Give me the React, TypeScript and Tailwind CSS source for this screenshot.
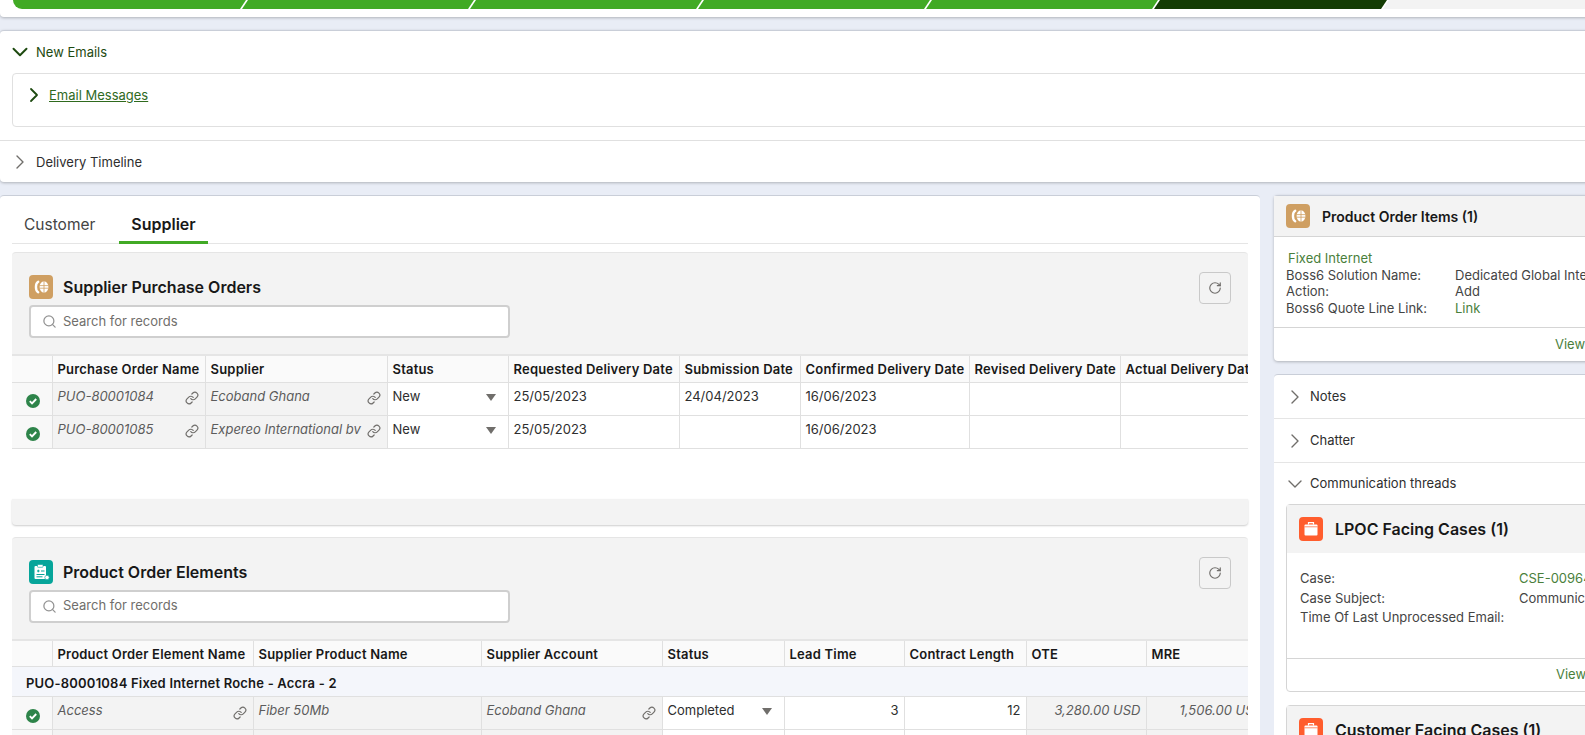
import React from 'react';
import { ChevronDown, ChevronRight, Link, RotateCw, Search } from 'lucide-react';

const CoinIcon = () => (
  <svg width="24" height="24" viewBox="0 0 24 24" className="shrink-0">
    <rect width="24" height="24" rx="4" fill="#cf9f62" />
    <path d="M9.2 6.8C6.2 8.4 6.2 15.6 9.2 17.2" fill="none" stroke="#fff" strokeWidth="2.4" strokeLinecap="round" />
    <ellipse cx="15" cy="12" rx="4.4" ry="5.8" fill="#fff" />
    <path d="M15 6v12M10.6 10.6h8.8M10.6 13.2h8.8" stroke="#cf9f62" strokeWidth="0.8" />
  </svg>
);

const ClipboardIcon = () => (
  <svg width="24" height="24" viewBox="0 0 24 24" className="shrink-0">
    <rect width="24" height="24" rx="4" fill="#06a59a" />
    <rect x="5.5" y="6" width="11.5" height="13" rx="1" fill="#fff" />
    <rect x="8.5" y="4.5" width="5.5" height="2.8" rx="0.6" fill="#fff" stroke="#06a59a" strokeWidth="0.6" />
    <path d="M8 11h2.6M9.3 9.7v2.6M12 11h3.5M7.5 14.5h8M7.5 16.8h6" stroke="#06a59a" strokeWidth="1" />
    <circle cx="18" cy="17.5" r="2.2" fill="#fff" stroke="#06a59a" strokeWidth="0.6" />
  </svg>
);

const CaseIcon = () => (
  <svg width="24" height="24" viewBox="0 0 24 24" className="shrink-0">
    <rect width="24" height="24" rx="4" fill="#ff5d2d" />
    <rect x="5.5" y="7.5" width="13" height="11" rx="1" fill="#fff" />
    <path d="M9.5 7.5V5.6h5v1.9" fill="none" stroke="#fff" strokeWidth="1.2" />
    <path d="M5.5 9.8h13" stroke="#ff5d2d" strokeWidth="0.7" />
  </svg>
);

const DoneIcon = () => (
  <svg width="14" height="14" viewBox="0 0 14 14">
    <circle cx="7" cy="7" r="7" fill="#2e844a" />
    <path d="M3.8 7.2l2.2 2.2 4.2-4.4" fill="none" stroke="#fff" strokeWidth="1.9" />
  </svg>
);

const Caret = () => (
  <svg width="10" height="7" viewBox="0 0 10 7" className="mt-[2px] shrink-0">
    <path d="M0 0h10L5 7z" fill="#706e6b" />
  </svg>
);

const Th: React.FC<{ children?: React.ReactNode }> = ({ children }) => (
  <th className="border-r border-b border-[#e0e0e0] bg-[#fafafa] px-[5px] pt-[2px] text-left text-[13px] font-semibold tracking-[0.2px] whitespace-nowrap overflow-hidden text-[#181818] last:border-r-0">
    {children}
  </th>
);

const CheckCell = () => (
  <td className="border-r border-b border-[#e0e0e0] bg-[#f8f8f8] pl-[14px] pt-[5px]">
    <DoneIcon />
  </td>
);

const LinkCell: React.FC<{ text: string }> = ({ text }) => (
  <td className="border-r border-b border-[#e0e0e0] bg-[#f3f3f3] pl-[5px] pr-[6px] align-top">
    <div className="flex items-center justify-between pt-[4px] text-[13px] italic text-[#5c5c5c] whitespace-nowrap">
      <span>{text}</span>
      <Link size={14} className="mt-[4px] shrink-0 text-[#706e6b]" />
    </div>
  </td>
);

const ReadCell: React.FC<{ text: string }> = ({ text }) => (
  <td className="border-r border-b border-[#e0e0e0] bg-[#f3f3f3] px-[5px] pt-[4px] align-top text-[13px] italic text-[#5c5c5c] whitespace-nowrap">
    {text}
  </td>
);

const StatusCell: React.FC<{ text: string }> = ({ text }) => (
  <td className="border-r border-b border-[#e0e0e0] pl-[5px] pr-[12px] align-top">
    <div className="flex items-center justify-between pt-[4px] text-[13px] text-[#2e2e2e]">
      <span>{text}</span>
      <Caret />
    </div>
  </td>
);

const Td: React.FC<{ children?: React.ReactNode; right?: boolean; last?: boolean }> = ({ children, right, last }) => (
  <td className={`border-b border-[#e0e0e0] px-[5px] pt-[4px] align-top text-[13px] text-[#2e2e2e] whitespace-nowrap overflow-hidden ${right ? 'text-right' : ''} ${last ? '' : 'border-r'}`}>
    {children}
  </td>
);

const SectionHeader: React.FC<{ icon: React.ReactNode; title: string }> = ({ icon, title }) => (
  <div className="flex h-[102px] justify-between rounded-t-[4px] border-t border-[#e5e5e5] bg-[#f3f3f3] pr-[17px]">
    <div className="pl-[17px] pt-[22px]">
      <div className="flex items-center gap-[10px]">
        {icon}
        <span className="text-[16px] font-semibold text-[#181818]">{title}</span>
      </div>
      <div className="mt-[6px] flex h-[33px] w-[481px] items-center gap-[6px] rounded-[4px] border-2 border-[#cfcfcf] bg-white pl-[11px]">
        <Search size={15} className="text-[#939393]" />
        <span className="text-[13px] text-[#706e6b]">Search for records</span>
      </div>
    </div>
    <div className="pt-[19px]">
      <button className="flex h-[32px] w-[32px] items-center justify-center rounded-[4px] border border-[#c9c9c9] bg-[#f3f3f3]">
        <RotateCw size={14} className="text-[#706e6b]" />
      </button>
    </div>
  </div>
);

const Accordion: React.FC<{ label: string; border?: boolean }> = ({ label, border }) => (
  <div className={`flex h-[44px] items-center gap-[3px] pl-[9px] text-[13px] text-[#2e2e2e] ${border ? 'border-b border-[#e5e5e5]' : ''}`}>
    <ChevronRight size={24} strokeWidth={1.4} className="text-[#706e6b]" />
    <span>{label}</span>
  </div>
);

const App: React.FC = () => {
  const orderRows = [
    { name: 'PUO-80001084', supplier: 'Ecoband Ghana', sub: '24/04/2023' },
    { name: 'PUO-80001085', supplier: 'Expereo International bv', sub: '' },
  ];

  return (
    <div className="h-[735px] w-[1585px] overflow-hidden bg-[#e9edf6] font-[Inter,sans-serif]">
      {/* path bar */}
      <div className="h-[17px] w-[1600px] rounded-b-[4px] bg-white pl-[13px] shadow-[0_1px_3px_rgba(0,0,0,0.25)]">
        <div className="flex h-[9px]">
          <div className="h-full w-[233px] shrink-0 rounded-bl-[12px] bg-[#41aa25] [clip-path:polygon(0_0,100%_0,calc(100%-6px)_100%,0_100%)]" />
          <div className="-ml-[4px] h-full w-[232px] shrink-0 bg-[#41aa25] [clip-path:polygon(6px_0,100%_0,calc(100%-6px)_100%,0_100%)]" />
          <div className="-ml-[4px] h-full w-[232px] shrink-0 bg-[#41aa25] [clip-path:polygon(6px_0,100%_0,calc(100%-6px)_100%,0_100%)]" />
          <div className="-ml-[4px] h-full w-[232px] shrink-0 bg-[#41aa25] [clip-path:polygon(6px_0,100%_0,calc(100%-6px)_100%,0_100%)]" />
          <div className="-ml-[4px] h-full w-[232px] shrink-0 bg-[#41aa25] [clip-path:polygon(6px_0,100%_0,calc(100%-6px)_100%,0_100%)]" />
          <div className="-ml-[4px] h-full w-[233px] shrink-0 bg-[#143c04] [clip-path:polygon(6px_0,100%_0,calc(100%-6px)_100%,0_100%)]" />
          <div className="-ml-[4px] h-full w-[240px] shrink-0 bg-[#f3f3f3] [clip-path:polygon(6px_0,100%_0,100%_100%,0_100%)]" />
        </div>
      </div>

      {/* emails and timeline */}
      <div className="mt-[13px] w-[1600px] rounded-[4px] border-t border-[#c9ced8] bg-white shadow-[0_1px_3px_rgba(0,0,0,0.25)]">
        <div className="flex h-[42px] items-center gap-[3px] pl-[7px] text-[13px] text-[#1e4a10]">
          <ChevronDown size={26} strokeWidth={1.8} />
          <span className="mt-[2px]">New Emails</span>
        </div>
        <div className="ml-[12px] h-[54px] rounded-[4px] border border-[#e0e0e0] pl-[9px] pt-[9px]">
          <div className="flex items-center gap-[3px] text-[13px]">
            <ChevronRight size={24} strokeWidth={1.8} className="text-[#1e4a10]" />
            <span className="mt-[2px] text-[#2f6a1e] underline">Email Messages</span>
          </div>
        </div>
        <div className="mt-[13px] flex h-[42px] items-center gap-[4px] border-t border-[#e0e0e0] pl-[8px] text-[13px] text-[#2e2e2e]">
          <ChevronRight size={24} strokeWidth={1.4} className="text-[#706e6b]" />
          <span className="mt-[2px]">Delivery Timeline</span>
        </div>
      </div>

      <div className="mt-[13px] flex w-[1600px] items-start gap-[14px]">
        {/* left card */}
        <div className="h-[560px] w-[1260px] shrink-0 rounded-[4px] border-t border-[#c9ced8] bg-white px-[12px]">
          <div className="flex h-[48px] items-end border-b border-[#e5e5e5] text-[15.5px]">
            <div className="flex h-[47px] w-[107px] items-center pl-[12px] pt-[11px] text-[#444]">Customer</div>
            <div className="-mb-px flex h-[49px] w-[89px] items-center justify-center border-b-[3px] border-[#41aa25] pt-[12px] text-[16px] font-semibold text-[#181818]">
              Supplier
            </div>
          </div>

          <div className="mt-[8px]">
            <SectionHeader icon={<CoinIcon />} title="Supplier Purchase Orders" />
            <table className="w-[1236px] table-fixed border-collapse border-t-2 border-[#e5e5e5]">
              <colgroup>
                <col className="w-[40px]" /><col className="w-[153px]" /><col className="w-[182px]" />
                <col className="w-[121px]" /><col className="w-[171px]" /><col className="w-[121px]" />
                <col className="w-[169px]" /><col className="w-[151px]" /><col className="w-[128px]" />
              </colgroup>
              <thead>
                <tr className="h-[27px]">
                  <Th /><Th>Purchase Order Name</Th><Th>Supplier</Th><Th>Status</Th><Th>Requested Delivery Date</Th>
                  <Th>Submission Date</Th><Th>Confirmed Delivery Date</Th><Th>Revised Delivery Date</Th><Th>Actual Delivery Date</Th>
                </tr>
              </thead>
              <tbody>
                {orderRows.map((r) => (
                  <tr key={r.name} className="h-[33px]">
                    <CheckCell />
                    <LinkCell text={r.name} />
                    <LinkCell text={r.supplier} />
                    <StatusCell text="New" />
                    <Td>25/05/2023</Td>
                    <Td>{r.sub}</Td>
                    <Td>16/06/2023</Td>
                    <Td />
                    <Td last />
                  </tr>
                ))}
              </tbody>
            </table>
          </div>

          <div className="mt-[50px] h-[26px] rounded-b-[4px] bg-[#f3f3f3] shadow-[0_1px_2px_rgba(0,0,0,0.2)]" />

          <div className="mt-[12px]">
            <SectionHeader icon={<ClipboardIcon />} title="Product Order Elements" />
            <table className="w-[1236px] table-fixed border-collapse border-t-2 border-[#e5e5e5]">
              <colgroup>
                <col className="w-[40px]" /><col className="w-[201px]" /><col className="w-[228px]" />
                <col className="w-[181px]" /><col className="w-[122px]" /><col className="w-[120px]" />
                <col className="w-[122px]" /><col className="w-[120px]" /><col className="w-[102px]" />
              </colgroup>
              <thead>
                <tr className="h-[27px]">
                  <Th /><Th>Product Order Element Name</Th><Th>Supplier Product Name</Th><Th>Supplier Account</Th><Th>Status</Th>
                  <Th>Lead Time</Th><Th>Contract Length</Th><Th>OTE</Th><Th>MRE</Th>
                </tr>
              </thead>
              <tbody>
                <tr className="h-[30px]">
                  <td colSpan={9} className="border-b border-[#e0e0e0] bg-[#f4f6fb] pl-[14px] pt-[4px] text-[13px] font-semibold tracking-[0.2px] text-[#181818]">
                    PUO-80001084 Fixed Internet Roche - Accra - 2
                  </td>
                </tr>
                <tr className="h-[33px]">
                  <CheckCell />
                  <LinkCell text="Access" />
                  <ReadCell text="Fiber 50Mb" />
                  <LinkCell text="Ecoband Ghana" />
                  <StatusCell text="Completed" />
                  <Td right>3</Td>
                  <Td right>12</Td>
                  <td className="border-r border-b border-[#e0e0e0] bg-[#f3f3f3] px-[5px] pt-[4px] align-top text-right text-[13px] italic text-[#5c5c5c] whitespace-nowrap">3,280.00 USD</td>
                  <td className="overflow-hidden border-b border-[#e0e0e0] bg-[#f3f3f3] pl-[33px] pt-[4px] align-top text-[13px] italic text-[#5c5c5c] whitespace-nowrap">1,506.00 USD</td>
                </tr>
                <tr className="h-[33px]">
                  <td className="border-r border-[#e0e0e0] bg-[#f8f8f8]" />
                  <td className="border-r border-[#e0e0e0] bg-[#f3f3f3]" />
                  <td className="border-r border-[#e0e0e0] bg-[#f3f3f3]" />
                  <td className="border-r border-[#e0e0e0] bg-[#f3f3f3]" />
                  <td className="border-r border-[#e0e0e0]" />
                  <td className="border-r border-[#e0e0e0]" />
                  <td className="border-r border-[#e0e0e0]" />
                  <td className="border-r border-[#e0e0e0] bg-[#f3f3f3]" />
                  <td className="bg-[#f3f3f3]" />
                </tr>
              </tbody>
            </table>
          </div>
        </div>

        {/* right column */}
        <div className="w-[326px] shrink-0 text-[13px]">
          <div className="rounded-[4px] border-t border-[#c9ced8] bg-white shadow-[0_1px_3px_rgba(0,0,0,0.25)]">
            <div className="flex h-[41px] items-center gap-[12px] border-b border-[#d5d5d5] bg-[#f3f3f3] pl-[12px]">
              <CoinIcon />
              <span className="text-[14px] font-semibold text-[#181818]">Product Order Items (1)</span>
            </div>
            <div className="h-[91px] border-b border-[#d5d5d5] pl-[12px] pt-[13px] leading-[16.5px] text-[#444]">
              <div className="pl-[2px] text-[#4a7f3c]">Fixed Internet</div>
              <div className="grid grid-cols-[169px_1fr] whitespace-nowrap">
                <span>Boss6 Solution Name:</span><span>Dedicated Global Internet</span>
                <span>Action:</span><span>Add</span>
                <span>Boss6 Quote Line Link:</span><span className="text-[#4a7f3c]">Link</span>
              </div>
            </div>
            <div className="flex h-[33px] items-center pl-[281px] text-[#4a7f3c]">View</div>
          </div>

          <div className="mt-[13px] rounded-[4px] border-t border-[#c9ced8] bg-white">
            <Accordion label="Notes" border />
            <Accordion label="Chatter" border />
            <div className="flex h-[41px] items-center gap-[3px] pl-[9px] text-[#2e2e2e]">
              <ChevronDown size={24} strokeWidth={1.4} className="text-[#706e6b]" />
              <span>Communication threads</span>
            </div>
            <div className="ml-[12px] rounded-[4px] border border-[#d5d5d5]">
              <div className="flex h-[48px] items-center gap-[12px] bg-[#f3f3f3] pl-[12px]">
                <CaseIcon />
                <span className="text-[16px] font-semibold text-[#181818]">LPOC Facing Cases (1)</span>
              </div>
              <div className="h-[106px] border-b border-[#d5d5d5] pl-[13px] pt-[16px] leading-[19.5px] text-[#444]">
                <div className="grid grid-cols-[219px_1fr] whitespace-nowrap">
                  <span>Case:</span><span className="text-[#4a7f3c]">CSE-00964</span>
                  <span>Case Subject:</span><span>Communication</span>
                  <span>Time Of Last Unprocessed Email:</span><span />
                </div>
              </div>
              <div className="flex h-[32px] items-center pl-[269px] text-[#4a7f3c]">View</div>
            </div>
            <div className="ml-[12px] mt-[13px] rounded-[4px] border border-[#d5d5d5]">
              <div className="flex h-[48px] items-center gap-[12px] bg-[#f3f3f3] pl-[12px]">
                <CaseIcon />
                <span className="text-[16px] font-semibold text-[#181818]">Customer Facing Cases (1)</span>
              </div>
            </div>
          </div>
        </div>
      </div>
    </div>
  );
};

export default App;
